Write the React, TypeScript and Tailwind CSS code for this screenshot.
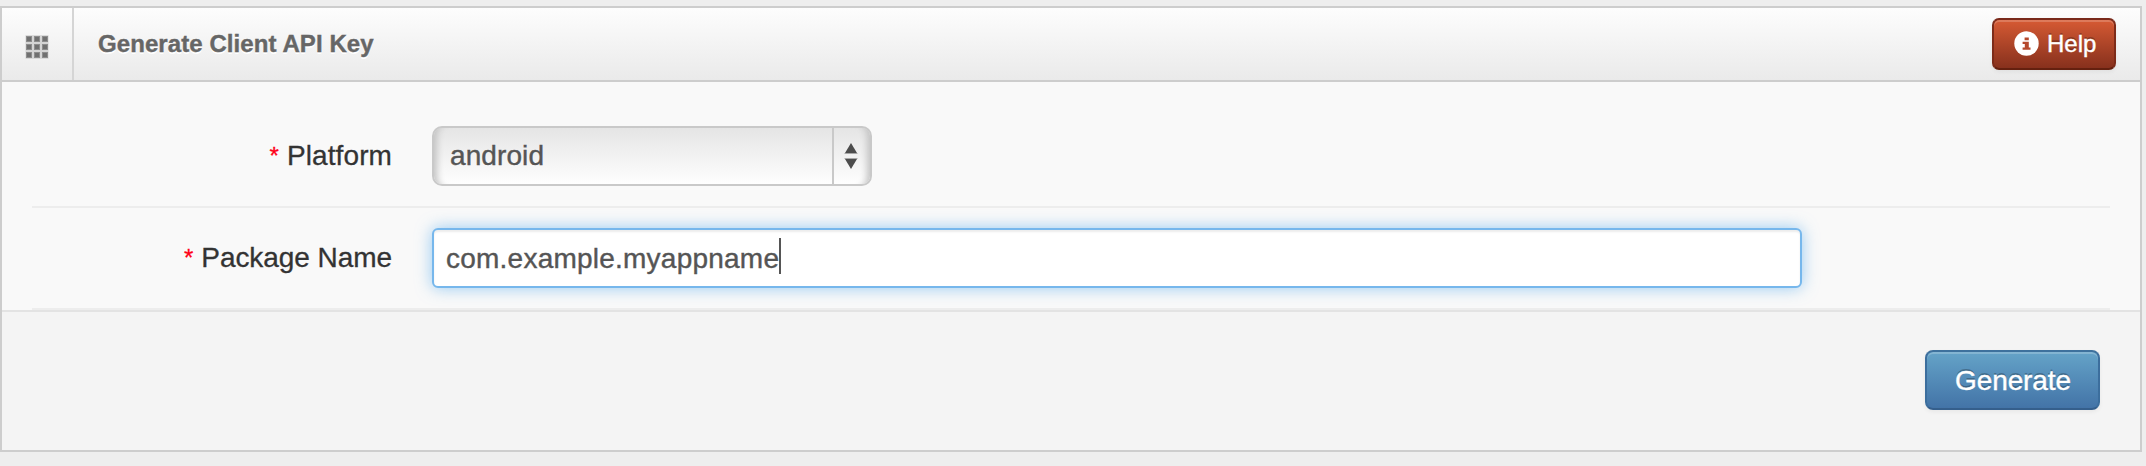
import type { ReactNode } from "react";

function GridIcon() {
  const cells = [0, 8, 16];
  return (
    <svg width="26" height="24" viewBox="0 0 26 24">
      <rect x="2.5" y="0.2" width="23" height="23.6" fill="#d4d4d4" />
      {cells.map((y) =>
        cells.map((x) => (
          <g key={`${x}-${y}`}>
            <rect x={x + 3} y={y + 1} width="6" height="6" fill="#8d8d8d" />
            <rect x={x + 4} y={y + 2} width="4" height="4" fill="#707070" />
          </g>
        )),
      )}
    </svg>
  );
}

function InfoIcon() {
  return (
    <svg width="25" height="25" viewBox="0 0 25 25">
      <circle cx="12.5" cy="12.5" r="12.2" fill="#fff" />
      <path d="M10.6 6.4h4.2v2.8h-4.2zM8.6 10.8h6.2v5.8h1.7v2.2H8.6v-2.2h2.2V13H8.6z" fill="#b5482c" />
    </svg>
  );
}

function SelectArrows() {
  return (
    <svg width="14" height="28" viewBox="0 0 14 28">
      <path d="M7 1L13 11H1z" fill="#4d4d4d" />
      <path d="M7 27L13 17H1z" fill="#4d4d4d" />
      <path d="M0.5 11.5h13M0.5 16.5h13" stroke="#a8a8a8" strokeWidth="1" />
    </svg>
  );
}

function Row({ label, spacing, children }: { label: string; spacing: string; children: ReactNode }) {
  return (
    <div className="flex h-[102px] border-b-2 border-[#ededed] pt-[18px]">
      <label className="mr-[40px] flex w-[360px] justify-end gap-[8px] whitespace-nowrap pt-[12px] text-[28px] leading-[40px] text-[#333] [-webkit-text-stroke:0.3px_#333]">
        <span className="text-[24px] leading-[39px] text-[#ff0018] [-webkit-text-stroke:0.3px_#ff0018]">*</span>
        <span className={spacing}>{label}</span>
      </label>
      {children}
    </div>
  );
}

export default function App() {
  return (
    <div className="h-[466px] w-[2146px] overflow-hidden bg-[#eeeeee] pt-[6px] font-['Liberation_Sans',Arial,sans-serif]">
      <section className="flex h-[446px] w-[2142px] flex-col border-2 border-[#cdcdcd] bg-[#f9f9f9]">
        <header className="flex h-[74px] shrink-0 border-b-2 border-[#cdcdcd] bg-linear-to-b from-[#fdfdfd] to-[#eaeaea]">
          <div className="flex w-[72px] shrink-0 border-r-2 border-[#d5d5d5] pl-[21px] pt-[27px]">
            <GridIcon />
          </div>
          <h5 className="grow pl-[24px] pt-[18px] text-[24px] font-bold leading-[36px] tracking-[0.08px] text-[#666] [-webkit-text-stroke:0.4px_#666] [text-shadow:0_2px_0_#fff]">
            Generate Client API Key
          </h5>
          <button
            type="button"
            className="mr-[24px] mt-[10px] flex h-[52px] w-[124px] items-start rounded-[7px] border-2 border-x-[#7d2b19] border-b-[#64200f] border-t-[#79291a] bg-linear-to-b from-[#da5c35] to-[#842f1c] bg-origin-border pl-[20px] pt-[11px] text-[24px] leading-[28px] text-white shadow-[inset_0_2px_0_rgba(255,255,255,0.2),0_2px_4px_rgba(0,0,0,0.05)] [-webkit-text-stroke:0.4px_#fff] [text-shadow:0_-2px_0_rgba(0,0,0,0.25)]"
          >
            <InfoIcon />
            <span className="ml-[8px] mt-[-1px]">Help</span>
          </button>
        </header>
        <form className="mx-[30px] flex h-[228px] shrink-0 flex-col pt-[24px]">
          <Row label="Platform" spacing="tracking-[0.1px]">
            <div className="mt-[2px] flex h-[60px] w-[440px] rounded-[10px] border-2 border-[#c9c9c9] bg-linear-to-b from-[#e5e5e5] to-[#fefefe] text-[28px] leading-[40px] text-[#555] shadow-[inset_10px_0_7px_-7px_#c2c2c2,inset_-10px_0_7px_-7px_#c2c2c2]">
              <span className="w-[398px] pl-[16px] pt-[8px] tracking-[0.1px] [-webkit-text-stroke:0.4px_#555]">android</span>
              <span className="flex h-full grow border-l-2 border-[#c9c9c9] pl-[10px] pt-[14px]">
                <SelectArrows />
              </span>
            </div>
          </Row>
          <Row label="Package Name" spacing="tracking-[-0.06px]">
            <div className="mt-[2px] flex h-[60px] w-[1370px] rounded-[6px] border-2 border-[#76b7ec] bg-white pl-[12px] text-[28px] leading-[40px] text-[#555] shadow-[inset_0_2px_2px_rgba(0,0,0,0.075),0_0_16px_rgba(82,168,236,0.6)]">
              <span className="pt-[9px] tracking-[0.23px] [-webkit-text-stroke:0.4px_#555]">com.example.myappname</span>
              <span className="mt-[8px] h-[36px] w-[2px] bg-[#555]" />
            </div>
          </Row>
        </form>
        <footer className="flex grow justify-end border-t-2 border-[#e3e3e3] bg-[#f4f4f4] pr-[40px] pt-[38px]">
          <button
            type="button"
            className="h-[60px] w-[175px] rounded-[8px] border-2 border-x-[#3c6e9d] border-b-[#355f8c] border-t-[#3e719d] bg-linear-to-b from-[#66a5c9] to-[#4272a6] bg-origin-border pl-[1px] pt-[2px] text-[28px] leading-[40px] tracking-[-0.1px] text-white shadow-[inset_0_2px_0_rgba(255,255,255,0.2),0_2px_4px_rgba(0,0,0,0.05)] [-webkit-text-stroke:0.4px_#fff] [text-shadow:0_-2px_0_rgba(0,0,0,0.25)]"
          >
            Generate
          </button>
        </footer>
      </section>
    </div>
  );
}
